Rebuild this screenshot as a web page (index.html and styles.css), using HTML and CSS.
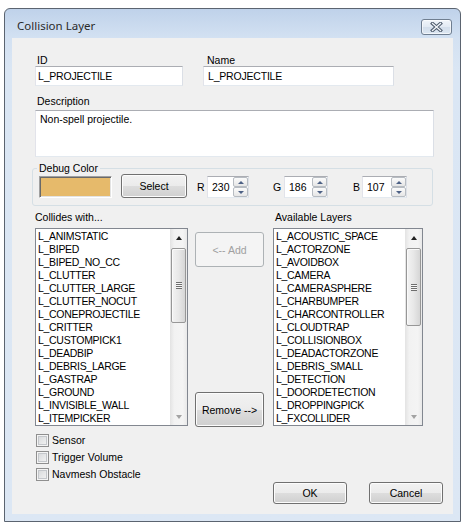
FILE: index.html
```html
<!DOCTYPE html>
<html>
<head>
<meta charset="utf-8">
<link rel="stylesheet" href="styles.css">
</head>
<body>
<div class="window">
  <div class="titlebar">
    <span class="title">Collision Layer</span>
    <div class="close">
      <svg width="13" height="10" viewBox="0 0 13 10">
        <path d="M2.5 1.5 L10.5 8.5 M10.5 1.5 L2.5 8.5" stroke="#4f5d6e" stroke-width="3.4" stroke-linecap="square" fill="none"/>
        <path d="M2.5 1.5 L10.5 8.5 M10.5 1.5 L2.5 8.5" stroke="#f3f6fa" stroke-width="1.3" stroke-linecap="square" fill="none"/>
      </svg>
    </div>
  </div>
  <div class="client">
    <div class="fields">
      <div class="field f-id"><span class="lbl">ID</span><div class="textbox">L_PROJECTILE</div></div>
      <div class="field f-name"><span class="lbl">Name</span><div class="textbox tb-name">L_PROJECTILE</div></div>
    </div>
    <div class="field f-desc"><span class="lbl">Description</span><div class="textarea">Non-spell projectile.</div></div>
    <fieldset class="group">
      <legend>Debug Color</legend>
      <div class="color-row">
        <div class="swatch"></div>
        <div class="btn select">Select</div>
        <span class="rgb-lbl l-r">R</span>
        <div class="spin s-r"><span class="spin-val">230</span><div class="spin-btns"><span class="sb up"></span><span class="sb down"></span></div></div>
        <span class="rgb-lbl l-g">G</span>
        <div class="spin s-g"><span class="spin-val">186</span><div class="spin-btns"><span class="sb up"></span><span class="sb down"></span></div></div>
        <span class="rgb-lbl l-b">B</span>
        <div class="spin s-b"><span class="spin-val">107</span><div class="spin-btns"><span class="sb up"></span><span class="sb down"></span></div></div>
      </div>
    </fieldset>
    <div class="lists-labels">
      <span class="lbl ll-left">Collides with...</span>
      <span class="lbl ll-right">Available Layers</span>
    </div>
    <div class="lists-body">
      <div class="listbox lb-left">
        <div class="items">
          <div>L_ANIMSTATIC</div>
          <div>L_BIPED</div>
          <div>L_BIPED_NO_CC</div>
          <div>L_CLUTTER</div>
          <div>L_CLUTTER_LARGE</div>
          <div>L_CLUTTER_NOCUT</div>
          <div>L_CONEPROJECTILE</div>
          <div>L_CRITTER</div>
          <div>L_CUSTOMPICK1</div>
          <div>L_DEADBIP</div>
          <div>L_DEBRIS_LARGE</div>
          <div>L_GASTRAP</div>
          <div>L_GROUND</div>
          <div>L_INVISIBLE_WALL</div>
          <div>L_ITEMPICKER</div>
        </div>
        <div class="vscroll">
          <div class="arrow arr-up"></div>
          <div class="track"><div class="thumb th-left"><span class="grip"></span></div></div>
          <div class="arrow arr-down"></div>
        </div>
      </div>
      <div class="mid">
        <div class="btn disabled">&lt;-- Add</div>
        <div class="btn">Remove --&gt;</div>
      </div>
      <div class="listbox lb-right">
        <div class="items">
          <div>L_ACOUSTIC_SPACE</div>
          <div>L_ACTORZONE</div>
          <div>L_AVOIDBOX</div>
          <div>L_CAMERA</div>
          <div>L_CAMERASPHERE</div>
          <div>L_CHARBUMPER</div>
          <div>L_CHARCONTROLLER</div>
          <div>L_CLOUDTRAP</div>
          <div>L_COLLISIONBOX</div>
          <div>L_DEADACTORZONE</div>
          <div>L_DEBRIS_SMALL</div>
          <div>L_DETECTION</div>
          <div>L_DOORDETECTION</div>
          <div>L_DROPPINGPICK</div>
          <div>L_FXCOLLIDER</div>
        </div>
        <div class="vscroll">
          <div class="arrow arr-up"></div>
          <div class="track"><div class="thumb th-right"><span class="grip"></span></div></div>
          <div class="arrow arr-down"></div>
        </div>
      </div>
    </div>
    <div class="bottom">
      <div class="checks">
        <div class="check"><span class="cbox"></span><span>Sensor</span></div>
        <div class="check"><span class="cbox"></span><span>Trigger Volume</span></div>
        <div class="check"><span class="cbox"></span><span>Navmesh Obstacle</span></div>
      </div>
      <div class="dlg-btns">
        <div class="btn dlg">OK</div>
        <div class="btn dlg">Cancel</div>
      </div>
    </div>
  </div>
</div>
</body>
</html>
```

FILE: styles.css
```css
html, body {
  margin: 0;
  background: #ffffff;
}
body {
  padding: 8px 0 0 4px;
  font-family: "Liberation Sans", Arial, sans-serif;
  font-size: 10.5px;
  color: #000;
}
.window {
  width: 457px;
  height: 514px;
  box-sizing: border-box;
  border: 1px solid #5b6470;
  border-radius: 6px 6px 0 0;
  background: linear-gradient(#bfd2ea, #d3e1f2 29px, #dae6f4 60px, #dce7f4);
  padding: 0 7px 7px;
  display: flex;
  flex-direction: column;
}
.titlebar {
  height: 29px;
  flex: none;
  display: flex;
  justify-content: space-between;
  align-items: flex-start;
  padding-left: 5px;
}
.title {
  font-family: "Noto Sans", "Open Sans", sans-serif;
  font-size: 11.5px;
  line-height: 16px;
  margin-top: 9px;
  color: #2a2a2a;
}
.close {
  margin-top: 10px;
  margin-right: 1px;
  width: 31px;
  height: 16px;
  box-sizing: border-box;
  border: 1px solid #6f7e90;
  border-radius: 3px;
  background: linear-gradient(#f1f5fa, #e2eaf3 50%, #d3deeb 51%, #dde7f2);
  box-shadow: inset 0 0 0 1px rgba(255,255,255,0.6);
  display: flex;
  align-items: center;
  justify-content: center;
}
.close svg { display: block; }
.client {
  flex: 1;
  background: #f0f0f0;
  padding-top: 17px;
  box-sizing: border-box;
}
.lbl {
  display: block;
  line-height: 11px;
  height: 11px;
  padding-left: 2px;
  white-space: nowrap;
}
.fields {
  display: flex;
  padding-left: 23px;
}
.f-id { width: 148px; margin-right: 20px; }
.f-name { width: 191px; }
.f-name .lbl { padding-left: 4px; }
.textbox {
  height: 20px;
  box-sizing: border-box;
  border: 1px solid;
  border-color: #abadb3 #dbdfe6 #e3e9ef #e2e3ea;
  background: #fff;
  line-height: 18px;
  padding-left: 2px;
  white-space: nowrap;
  letter-spacing: -0.2px;
}
.tb-name { padding-left: 4px; }
.f-desc {
  width: 399px;
  margin: 10px 0 0 23px;
}
.textarea {
  margin-top: 3px;
  height: 47px;
  box-sizing: border-box;
  border: 1px solid;
  border-color: #abadb3 #dbdfe6 #e3e9ef #e2e3ea;
  background: #fff;
  padding: 2px 4px;
  line-height: 13px;
}
.group {
  margin: 5px 0 0 20px;
  width: 401px;
  box-sizing: border-box;
  border: 1px solid #d5dfe5;
  border-radius: 3px;
  padding: 0 6px 7px;
  min-width: 0;
}
.group legend {
  line-height: 12px;
  padding: 0 2px;
  margin-left: -2px;
}
.color-row {
  display: flex;
  align-items: flex-end;
  height: 24px;
}
.swatch {
  width: 73px;
  height: 22px;
  box-sizing: border-box;
  background: #e6ba6b;
  border: 1px solid;
  border-color: #a0a0a0 #ffffff #ffffff #a0a0a0;
  box-shadow: inset 1px 1px 0 #696969, inset -1px -1px 0 #e3e3e3;
}
.btn {
  box-sizing: border-box;
  border: 1px solid #707070;
  border-radius: 3px;
  background: linear-gradient(#f2f2f2, #ebebeb 50%, #dddddd 51%, #cfcfcf);
  box-shadow: inset 0 0 0 1px #fcfcfc;
  display: flex;
  align-items: center;
  justify-content: center;
  white-space: nowrap;
}
.select {
  width: 66px;
  height: 24px;
  margin-left: 9px;
}
.rgb-lbl {
  line-height: 22px;
}
.l-r { margin-left: 10px; width: 10px; }
.l-g { margin-left: 24px; width: 11px; }
.l-b { margin-left: 25px; width: 9px; }
.spin {
  height: 22px;
  box-sizing: border-box;
  border: 1px solid;
  border-color: #abadb3 #dbdfe6 #e3e9ef #e2e3ea;
  background: #fff;
  display: flex;
}
.s-r { width: 42px; }
.s-g { width: 44px; }
.s-b { width: 45px; }
.spin-val {
  flex: 1;
  padding-left: 4px;
  line-height: 20px;
}
.spin-btns {
  width: 15px;
  display: flex;
  flex-direction: column;
}
.sb {
  flex: 1;
  box-sizing: border-box;
  border: 1px solid #b7bcc2;
  border-radius: 2px;
  background: linear-gradient(#fbfbfb, #e6e6e6);
  display: flex;
  align-items: center;
  justify-content: center;
}
.sb::after {
  content: "";
  width: 0;
  height: 0;
  border-left: 3px solid transparent;
  border-right: 3px solid transparent;
}
.up::after { border-bottom: 3px solid #4d6185; }
.down::after { border-top: 3px solid #4d6185; }
.lists-labels {
  display: flex;
  margin: 6px 0 0 23px;
}
.ll-left { width: 238px; padding-left: 0; }
.ll-right { padding-left: 2px; }
.lists-body {
  display: flex;
  margin: 5px 0 0 23px;
}
.listbox {
  height: 198px;
  box-sizing: border-box;
  border: 1px solid #828790;
  background: #fff;
  display: flex;
  overflow: hidden;
}
.lb-left { width: 153px; }
.lb-right { width: 150px; }
.items {
  flex: 1;
  padding: 1px 0 0 2px;
  line-height: 13px;
  white-space: nowrap;
  overflow: hidden;
  letter-spacing: -0.3px;
}
.vscroll {
  width: 17px;
  display: flex;
  flex-direction: column;
  background: linear-gradient(90deg, #e3e3e3, #f2f2f2 25%, #f4f4f4 75%, #e9e9e9);
}
.arrow {
  height: 17px;
  flex: none;
  display: flex;
  align-items: center;
  justify-content: center;
}
.arrow::after {
  content: "";
  width: 0;
  height: 0;
  border-left: 3.5px solid transparent;
  border-right: 3.5px solid transparent;
}
.arr-up::after { border-bottom: 4px solid #222; }
.arr-down::after { border-top: 4px solid #a3a3a3; }
.track {
  flex: 1;
  display: flex;
  flex-direction: column;
}
.thumb {
  margin: 2px 1px 0 1px;
  box-sizing: border-box;
  border: 1px solid #979797;
  border-radius: 2px;
  background: linear-gradient(90deg, #f3f3f3, #e8e8e8 50%, #d6d6d6);
  box-shadow: inset 1px 1px 0 #fafafa;
  display: flex;
  align-items: center;
  justify-content: center;
}
.th-left { height: 75px; }
.th-right { height: 78px; }
.grip {
  width: 6px;
  height: 7px;
  background: repeating-linear-gradient(#6e6e6e 0 1px, #f6f6f6 1px 2px);
}
.mid {
  width: 69px;
  margin: 0 9px 0 7px;
  padding-top: 4px;
  margin-bottom: -1px;
  display: flex;
  flex-direction: column;
  justify-content: space-between;
}
.mid .btn { height: 35px; }
.btn.disabled {
  border-color: #adb2b5;
  background: #f4f4f4;
  box-shadow: none;
  color: #a0a0a0;
}
.bottom {
  display: flex;
  height: 70px;
  margin-top: 8px;
  padding-left: 24px;
}
.checks {
  display: flex;
  flex-direction: column;
}
.check {
  height: 17px;
  display: flex;
  align-items: flex-start;
  line-height: 13px;
}
.cbox {
  width: 13px;
  height: 13px;
  box-sizing: border-box;
  border: 1px solid #8f8f8f;
  background: linear-gradient(135deg, #d4d6d8, #f6f6f6);
  box-shadow: inset 0 0 0 1px #f4f4f4, inset 0 0 0 2px #c4c7cb;
  margin-right: 3px;
}
.dlg-btns {
  margin-left: auto;
  margin-right: 10px;
  align-self: flex-end;
  display: flex;
  gap: 22px;
}
.dlg {
  width: 74px;
  height: 22px;
}
```
